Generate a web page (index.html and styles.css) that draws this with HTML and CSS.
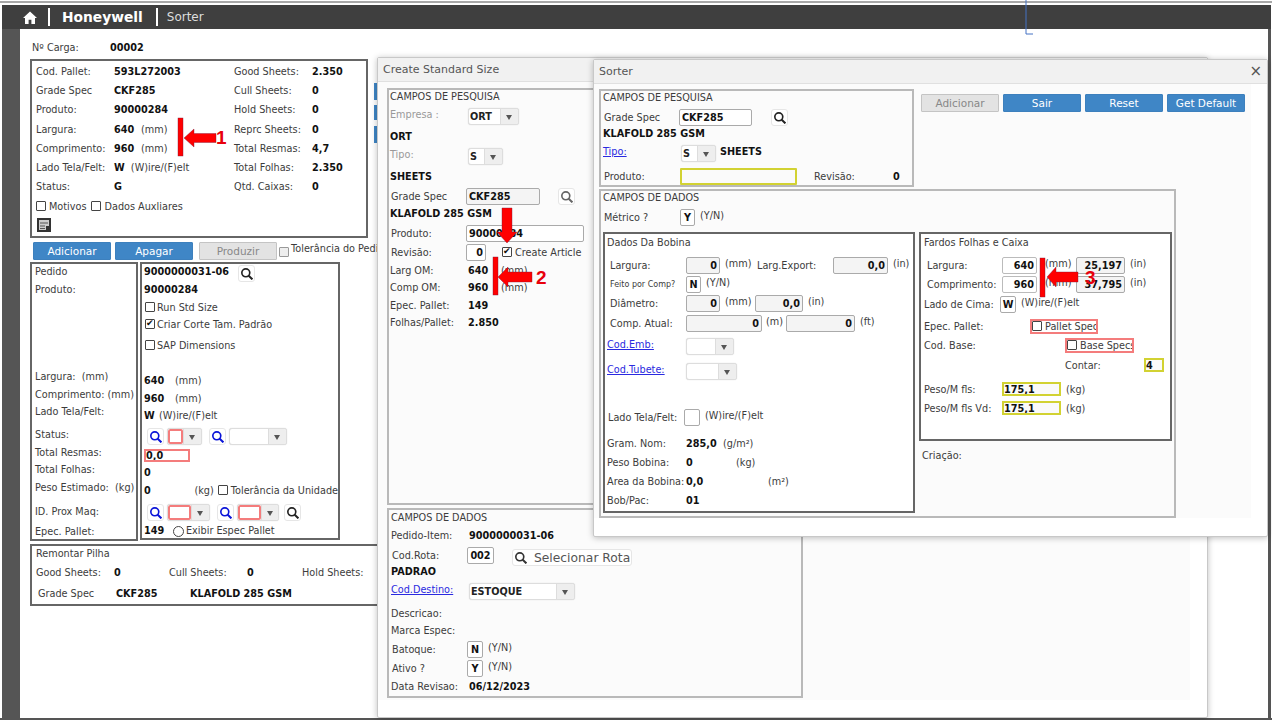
FILE: index.html
```html
<!DOCTYPE html>
<html lang="pt">
<head>
  <meta charset="UTF-8" />
  <title>Sorter</title>
  <link rel="stylesheet" href="styles.css">
</head>
<body>
  <svg class="defs" width="0" height="0">
    <symbol id="lupa" viewBox="1 1 14.500 14.500"><circle cx="6.800" cy="6.800" r="4.800" fill="none" stroke="currentColor" stroke-width="2"/><path d="M10.300 10.300 14.800 14.800" stroke="currentColor" stroke-width="2.400" fill="none"/></symbol>
  </svg>

  <div class="frame">
    <header class="topbar">
      <svg class="home" viewBox="0 0 14 13"><path d="M7 .5 0 7h2v6h3.600V8.800h2.800V13H12V7h2z" fill="#fff"/></svg>
      <span class="tsep"></span>
      <span class="brand">Honeywell</span>
      <span class="tsep tsep2"></span>
      <span class="appname">Sorter</span>
    </header>

    <div class="shell">
      <div class="rail"></div>
      <main class="main">
        <div class="row"><span class="lab carga">Nº Carga:</span><b>00002</b></div>

        <section class="box box-pallet">
          <div class="pallet-grid">
            <span>Cod. Pallet:</span><b>593L272003</b><span>Good Sheets:</span><b>2.350</b>
            <span>Grade Spec</span><b>CKF285</b><span>Cull Sheets:</span><b>0</b>
            <span>Produto:</span><b>90000284</b><span>Hold Sheets:</span><b>0</b>
            <span>Largura:</span><span><b class="v24">640</b> (mm)</span><span>Reprc Sheets:</span><b>0</b>
            <span>Comprimento:</span><span><b class="v24">960</b> (mm)</span><span>Total Resmas:</span><b>4,7</b>
            <span>Lado Tela/Felt:</span><span><b>W</b>&nbsp; (W)ire/(F)elt</span><span>Total Folhas:</span><b>2.350</b>
            <span>Status:</span><b>G</b><span>Qtd. Caixas:</span><b>0</b>
          </div>
          <div class="row checks"><input type="checkbox" class="cb"><span>Motivos</span><input type="checkbox" class="cb ml5"><span>Dados Auxliares</span></div>
          <svg class="calc" viewBox="0 0 14 14"><rect width="14" height="14" fill="#333"/><rect x="2" y="2" width="10" height="10" fill="#ccc"/><path d="M3 5h8M3 8h5M3 10.500h5" stroke="#555"/><rect x="9" y="8" width="3" height="4" fill="#333"/></svg>
        </section>

        <div class="btnrow">
          <button class="btn">Adicionar</button>
          <button class="btn">Apagar</button>
          <button class="btn off ml2">Produzir</button>
          <input type="checkbox" class="cb dim"><span class="tol">Tolerância do Pedido</span>
        </div>

        <div class="lower">
          <section class="box box-ped-l">
            <div class="row">Pedido</div>
            <div class="row g4">Produto:</div>
            <div class="row g73">Largura: &nbsp;(mm)</div>
            <div class="row g4">Comprimento: (mm)</div>
            <div class="row g3">Lado Tela/Felt:</div>
            <div class="row g9">Status:</div>
            <div class="row g4">Total Resmas:</div>
            <div class="row g3">Total Folhas:</div>
            <div class="row g4">Peso Estimado: &nbsp;(kg)</div>
            <div class="row g10">ID. Prox Maq:</div>
            <div class="row g6">Epec. Pallet:</div>
          </section>
          <section class="box box-ped-r">
            <div class="row"><b>9000000031-06</b><a class="sb ml9 low"><svg><use href="#lupa"/></svg></a></div>
            <div class="row g4"><b>90000284</b></div>
            <div class="row g4"><input type="checkbox" class="cb ml1"><span class="ml2">Run Std Size</span></div>
            <div class="row g3"><input type="checkbox" class="cb ml1" checked><span class="ml2">Criar Corte Tam. Padrão</span></div>
            <div class="row g7"><input type="checkbox" class="cb ml1"><span class="ml2">SAP Dimensions</span></div>
            <div class="row g21"><b class="v31">640</b><span>(mm)</span></div>
            <div class="row g4"><b class="v31">960</b><span>(mm)</span></div>
            <div class="row g3"><b class="v15">W</b><span>(W)ire/(F)elt</span></div>
            <div class="row g7 ml3">
              <a class="sb blue"><svg><use href="#lupa"/></svg></a>
              <div class="sel w35 ml3"><i class="sel-val redv w15"></i><i class="sel-arr"></i></div>
              <a class="sb blue ml7"><svg><use href="#lupa"/></svg></a>
              <div class="sel w58 ml3"><i class="sel-val"></i><i class="sel-arr"></i></div>
            </div>
            <div class="row g5"><input class="fld red w46 left" value="0,0" readonly></div>
            <div class="row g3"><b>0</b></div>
            <div class="row g4"><b class="v51">0</b><span>(kg)</span><input type="checkbox" class="cb ml4"><span class="ml3">Tolerância da Unidade</span></div>
            <div class="row g8 ml3">
              <a class="sb blue"><svg><use href="#lupa"/></svg></a>
              <div class="sel w43 ml3"><i class="sel-val redv w23"></i><i class="sel-arr"></i></div>
              <a class="sb blue ml7"><svg><use href="#lupa"/></svg></a>
              <div class="sel w42 ml3"><i class="sel-val redv w23"></i><i class="sel-arr"></i></div>
              <a class="sb ml5"><svg><use href="#lupa"/></svg></a>
            </div>
            <div class="row g4"><b class="v29">149</b><input type="radio" class="rd"><span class="ml2">Exibir Espec Pallet</span></div>
          </section>
        </div>

        <section class="box box-pilha">
          <div class="row">Remontar Pilha</div>
          <div class="row g5"><span class="c78">Good Sheets:</span><b class="c55">0</b><span class="c78">Cull Sheets:</span><b class="c55">0</b><span>Hold Sheets:</span></div>
          <div class="row g7 ml2"><span class="c78">Grade Spec</span><b class="c74">CKF285</b><b>KLAFOLD 285 GSM</b></div>
        </section>
      </main>
    </div>
  </div>

  <!-- pedacos de botoes atras da janela -->
  <div class="behind b1"></div>
  <div class="behind b2"></div>
  <div class="behind b3"></div>

  <!-- janela de tras -->
  <section class="win win-create">
    <div class="win-head">Create Standard Size</div>
    <div class="sheet">
      <div class="panel pn-create">
        <div class="row">CAMPOS DE PESQUISA</div>
        <div class="row g4"><span class="lab muted">Empresa :</span><div class="sel w51 low"><i class="sel-val">ORT</i><i class="sel-arr"></i></div></div>
        <div class="row g8"><b>ORT</b></div>
        <div class="row g4"><span class="lab muted">Tipo:</span><div class="sel w35 low"><i class="sel-val">S</i><i class="sel-arr"></i></div></div>
        <div class="row g8"><b>SHEETS</b></div>
        <div class="row g6"><span class="lab ind1">Grade Spec</span><input class="fld w74 left grey" value="CKF285" readonly><a class="sb ml18 gr"><svg><use href="#lupa"/></svg></a></div>
        <div class="row g3"><b>KLAFOLD 285 GSM</b></div>
        <div class="row g6"><span class="lab ind1">Produto:</span><input class="fld w118 left" value="90000284" readonly></div>
        <div class="row g5"><span class="lab ind1">Revisão:</span><input class="fld w20" value="0" readonly><input type="checkbox" class="cb ml16" checked><span class="ml3">Create Article</span></div>
        <div class="row g4"><span class="lab">Larg OM:</span><b class="v33">640</b><span>(mm)</span></div>
        <div class="row g3"><span class="lab">Comp OM:</span><b class="v33">960</b><span>(mm)</span></div>
        <div class="row g4"><span class="lab">Epec. Pallet:</span><b>149</b></div>
        <div class="row g3"><span class="lab">Folhas/Pallet:</span><b>2.850</b></div>
      </div>
      <div class="panel pn-rota">
        <div class="row">CAMPOS DE DADOS</div>
        <div class="row g4"><span class="lab">Pedido-Item:</span><b>9000000031-06</b></div>
        <div class="row g6"><span class="lab ind1">Cod.Rota:</span><input class="fld w27 rota" value="002" readonly><button class="rota-btn"><svg><use href="#lupa"/></svg>Selecionar Rota</button></div>
        <div class="row g2"><b>PADRAO</b></div>
        <div class="row g4"><a class="lab lnk">Cod.Destino:</a><div class="sel w106 low"><i class="sel-val">ESTOQUE</i><i class="sel-arr"></i></div></div>
        <div class="row g10">Descricao:</div>
        <div class="row g3">Marca Espec:</div>
        <div class="row g5"><span class="lab ind1">Batoque:</span><input class="fld w16 mid" value="N" readonly><span class="ml5 up">(Y/N)</span></div>
        <div class="row g5"><span class="lab ind1">Ativo ?</span><input class="fld w16 mid" value="Y" readonly><span class="ml5 up">(Y/N)</span></div>
        <div class="row g4"><span class="lab">Data Revisao:</span><b>06/12/2023</b></div>
      </div>
    </div>
  </section>

  <!-- janela da frente -->
  <section class="win win-sorter">
    <div class="win-head">Sorter<span class="close">×</span></div>
    <div class="sheet">
      <div class="sorter-top">
        <div class="panel pn-search">
          <div class="row">CAMPOS DE PESQUISA</div>
          <div class="row g6"><span class="lab ind1">Grade Spec</span><input class="fld w73 left" value="CKF285" readonly><a class="sb ml19"><svg><use href="#lupa"/></svg></a></div>
          <div class="row g2"><b>KLAFOLD 285 GSM</b></div>
          <div class="row g4"><a class="lab lnk">Tipo:</a><div class="sel w35 low ml2"><i class="sel-val">S</i><i class="sel-arr"></i></div><b class="ml4">SHEETS</b></div>
          <div class="row g11"><span class="lab ind1">Produto:</span><input class="fld yel w117 ml1" readonly><span class="rev">Revisão:</span><b>0</b></div>
        </div>
        <div class="btnrow sorter-btns">
          <button class="btn off">Adicionar</button>
          <button class="btn">Sair</button>
          <button class="btn">Reset</button>
          <button class="btn">Get Default</button>
        </div>
      </div>
      <div class="panel pn-dados">
        <div class="row">CAMPOS DE DADOS</div>
        <div class="row g6"><span class="lab ind1 metrico">Métrico ?</span><input class="fld w15 mid" value="Y" readonly><span class="ml5 up">(Y/N)</span></div>
        <div class="cols">
          <div class="box pn-bob">
            <div class="row">Dados Da Bobina</div>
            <div class="row g9"><span class="lab ind">Largura:</span><input class="fld w34 grey" value="0" readonly><span class="ml5 u32 up">(mm)</span><span class="lab2">Larg.Export:</span><input class="fld w55 grey" value="0,0" readonly><span class="ml5 up">(in)</span></div>
            <div class="row g5"><span class="lab ind tiny">Feito por Comp?</span><input class="fld w15 mid" value="N" readonly><span class="ml5 up">(Y/N)</span></div>
            <div class="row g5"><span class="lab ind">Diâmetro:</span><input class="fld w34 grey" value="0" readonly><span class="ml5 u30 up">(mm)</span><input class="fld w48 grey" value="0,0" readonly><span class="ml5 up">(in)</span></div>
            <div class="row g6"><span class="lab ind">Comp. Atual:</span><input class="fld w76 grey" value="0" readonly><span class="ml4 u20 up">(m)</span><input class="fld w69 grey" value="0" readonly><span class="ml5 up">(ft)</span></div>
            <div class="row g7"><a class="lab lnk">Cod.Emb:</a><div class="sel w48 low"><i class="sel-val"></i><i class="sel-arr"></i></div></div>
            <div class="row g11"><a class="lab lnk">Cod.Tubete:</a><div class="sel w51 low"><i class="sel-val"></i><i class="sel-arr"></i></div></div>
            <div class="row g34"><span class="lab lado">Lado Tela/Felt:</span><input class="fld w16" readonly><span class="ml5 up">(W)ire/(F)elt</span></div>
            <div class="row g12"><span class="lab">Gram. Nom:</span><b class="v37">285,0</b><span>(g/m²)</span></div>
            <div class="row g5"><span class="lab">Peso Bobina:</span><b class="v50">0</b><span>(kg)</span></div>
            <div class="row g5"><span class="lab">Area da Bobina:</span><b class="v82">0,0</b><span>(m²)</span></div>
            <div class="row g5"><span class="lab">Bob/Pac:</span><b>01</b></div>
          </div>
          <div class="far-col">
            <div class="box pn-far">
              <div class="row">Fardos Folhas e Caixa</div>
              <div class="row g9"><span class="lab ind">Largura:</span><input class="fld w35 strong" value="640" readonly><span class="ml8 u31 up">(mm)</span><input class="fld w49 grey" value="25,197" readonly><span class="ml5 up">(in)</span></div>
              <div class="row g5"><span class="lab ind">Comprimento:</span><input class="fld w35 strong" value="960" readonly><span class="ml8 u31 up">(mm)</span><input class="fld w49 grey" value="37,795" readonly><span class="ml5 up">(in)</span></div>
              <div class="row g6"><span class="lab l76">Lado de Cima:</span><input class="fld w16 mid" value="W" readonly><span class="ml5 up">(W)ire/(F)elt</span></div>
              <div class="row g8"><span class="lab l106">Epec. Pallet:</span><span class="flag w68"><input type="checkbox" class="cb"><span class="ml3">Pallet Spec</span></span></div>
              <div class="row g5"><span class="lab l141">Cod. Base:</span><span class="flag w69"><input type="checkbox" class="cb"><span class="ml3">Base Specs</span></span></div>
              <div class="row g6"><span class="lab l141"></span><span class="l80">Contar:</span><input class="fld yel w20 left" value="4" readonly></div>
              <div class="row g10"><span class="lab">Peso/M fls:</span><input class="fld yel w59 left" value="175,1" readonly><span class="ml5">(kg)</span></div>
              <div class="row g5"><span class="lab">Peso/M fls Vd:</span><input class="fld yel w59 left" value="175,1" readonly><span class="ml5">(kg)</span></div>
            </div>
            <div class="row criacao">Criação:</div>
          </div>
        </div>
      </div>
    </div>
  </section>

  <!-- setas de anotacao por cima da tela -->
  <svg class="notes" viewBox="0 0 1272 720">
    <path d="M1026 34V0M1026 34h7" stroke="#4472c4" stroke-width="1" fill="none"/>
    <g fill="#f00" stroke="#7a1a3a" stroke-width=".4">
      <rect x="178" y="118" width="5" height="38"/>
      <path d="M184 138 194 129v4.500h22v9h-22V147z"/>
      <rect x="493" y="257" width="5" height="38"/>
      <path d="M498 277 508 267v5h24v10h-24v5z"/>
      <path d="M502 208h10v24h5l-10 11-10-11h5z"/>
      <rect x="1040" y="258" width="5" height="39"/>
      <path d="M1047 277 1056 267v5h22v10h-22v5z"/>
    </g>
    <g class="note-num">
      <text x="216" y="144">1</text>
      <text x="536" y="284">2</text>
      <text x="1085" y="284">3</text>
    </g>
  </svg>
</body>
</html>
```

FILE: styles.css
```css
* {
  box-sizing: border-box;
}
body {
  margin: 0;
  width: 1272px;
  height: 720px;
  overflow: hidden;
  position: relative;
  background: #fff;
  font-family: "DejaVu Sans", sans-serif;
  font-size: 9.7px;
  color: #3c3c3c;
}
b {
  color: #111;
  font-weight: bold;
}
i {
  font-style: normal;
}
input {
  margin: 0;
}
.defs {
  position: absolute;
}

/* moldura */
.frame {
  height: 719px;
  margin-top: 1px;
  padding: 2px 1px 0 2px;
  border-top: 2px solid #a8a8a8;
  border-bottom: 2px solid #555;
  display: flex;
  flex-direction: column;
}
.topbar {
  height: 24px;
  flex: none;
  background: #3f3f3f;
  display: flex;
  align-items: center;
  color: #fff;
}
.home {
  width: 14px;
  height: 13px;
  margin-left: 21px;
}
.tsep {
  width: 2px;
  height: 18px;
  margin-left: 11px;
  background: #fff;
}
.tsep2 {
  margin-left: 13px;
}
.brand {
  margin-left: 12px;
  font-size: 13.8px;
  font-weight: bold;
}
.appname {
  margin-left: 9px;
  font-size: 12px;
  color: #ddd;
}
.shell {
  flex: 1;
  display: flex;
  border-right: 3px solid #555;
}
.rail {
  width: 18px;
  background: #555;
}
.main {
  flex: 1;
  padding: 11px 0 0 10px;
}

/* linhas de formulario */
.row {
  display: flex;
  align-items: center;
  height: 14px;
  white-space: nowrap;
}
.g2 { margin-top: 2px; }
.g3 { margin-top: 3px; }
.g4 { margin-top: 4px; }
.g5 { margin-top: 5px; }
.g6 { margin-top: 6px; }
.g7 { margin-top: 7px; }
.g8 { margin-top: 8px; }
.g9 { margin-top: 9px; }
.g10 { margin-top: 10px; }
.g11 { margin-top: 11px; }
.g12 { margin-top: 12px; }
.g21 { margin-top: 21px; }
.g34 { margin-top: 34px; }
.g73 { margin-top: 73px; }
.ml1 { margin-left: 1px; }
.ml2 { margin-left: 2px; }
.ml3 { margin-left: 3px; }
.ml4 { margin-left: 4px; }
.ml5 { margin-left: 5px; }
.ml7 { margin-left: 7px; }
.ml8 { margin-left: 8px; }
.ml9 { margin-left: 9px; }
.ml16 { margin-left: 16px; }
.ml18 { margin-left: 18px; }
.ml19 { margin-left: 19px; }
.low { margin-top: 5px; }
.up { margin-top: -3px; }
.lab {
  flex: none;
  width: 78px;
}
.lab.ind1 {
  padding-left: 1px;
}
.muted {
  color: #999;
}
.lnk {
  color: #2a2ae0;
  text-decoration: underline;
}
.tiny {
  font-size: 8px;
}
.carga {
  margin-left: 2px;
}

/* caixas */
.box {
  border: 2px solid #666;
  background: #fff;
}
.box-pallet {
  width: 338px;
  height: 179px;
  margin-top: 5px;
  padding: 1px 0 0 4px;
}
.pallet-grid {
  display: grid;
  grid-template-columns: 78px 120px 78px auto;
  grid-auto-rows: 19.2px;
  align-items: center;
  white-space: nowrap;
}
.v24 {
  display: inline-block;
  width: 24px;
}
.checks {
  margin-top: 3px;
}
.checks span {
  margin-left: 3px;
}
.calc {
  display: block;
  width: 14px;
  height: 14px;
  margin: 5px 0 0 1px;
}
.btnrow {
  display: flex;
  height: 18px;
  margin-top: 4px;
  margin-left: 3px;
  gap: 4px;
  white-space: nowrap;
}
.btn {
  width: 78px;
  height: 18px;
  padding: 0;
  border: 1px solid #3d80bd;
  border-radius: 1px;
  background: #3f86c6;
  color: #fff;
  font: 10.5px "DejaVu Sans", sans-serif;
}
.btn.off {
  background: #e3e3e3;
  border-color: #c4c4c4;
  color: #888;
}
.tol {
  margin: 1px 0 0 -2px;
}
.lower {
  display: flex;
  gap: 2px;
  margin-top: 2px;
}
.box-ped-l {
  width: 108px;
  height: 279px;
  padding-left: 3px;
  white-space: nowrap;
}
.box-ped-r {
  width: 200px;
  height: 278px;
  padding-left: 2px;
}
.v15 { width: 15px; }
.v29 { width: 29px; }
.v31 { width: 31px; }
.v33 { width: 33px; }
.v37 { width: 37px; }
.v50 { width: 50px; }
.v51 { width: 51px; }
.v82 { width: 82px; }
.box-pilha {
  width: 400px;
  height: 62px;
  margin-top: 3px;
  padding: 0 0 0 4px;
}
.c78 { width: 78px; }
.c55 { width: 55px; }
.c74 { width: 74px; }

/* campos */
.fld {
  flex: none;
  height: 17px;
  padding: 0 2px;
  border: 1.5px solid #aaa;
  border-radius: 2px;
  background: #fff;
  color: #111;
  font: bold 9.7px "DejaVu Sans", sans-serif;
  text-align: right;
  outline: none;
}
.fld.left { text-align: left; }
.fld.mid { text-align: center; padding: 0; }
.fld.grey { background: #f4f4f4; }
.fld.strong { border-color: #bbb; }
.fld.rota { text-align: center; padding: 0; }
.fld.red {
  height: 13px;
  padding: 0;
  border: 2px solid #f47c7c;
  border-radius: 0;
}
.fld.yel {
  height: 14px;
  padding: 0;
  border: 2px solid #d2d232;
  border-radius: 0;
  background: #fafafa;
}
.pn-search .fld.yel {
  height: 17px;
  border-radius: 1px;
}
.w15 { width: 15px; }
.w16 { width: 16px; }
.w20 { width: 20px; }
.w23 { width: 23px; }
.w27 { width: 27px; }
.w34 { width: 34px; }
.w35 { width: 35px; }
.w42 { width: 42px; }
.w43 { width: 43px; }
.w46 { width: 46px; }
.w48 { width: 48px; }
.w49 { width: 49px; }
.w51 { width: 51px; }
.w55 { width: 55px; }
.w58 { width: 58px; }
.w59 { width: 59px; }
.w68 { width: 68px; }
.w69 { width: 69px; }
.w73 { width: 73px; }
.w74 { width: 74px; }
.w76 { width: 76px; }
.w106 { width: 106px; }
.w117 { width: 117px; }
.w118 { width: 118px; }

.cb {
  appearance: none;
  flex: none;
  width: 10px;
  height: 10px;
  border: 1px solid #444;
  border-radius: 1px;
  background: #fff;
  position: relative;
}
.cb:checked::after {
  content: "✔";
  position: absolute;
  left: 0;
  top: -2px;
  font-size: 9px;
  line-height: 11px;
  color: #111;
}
.cb.dim {
  background: #eee;
  border-color: #999;
  margin: 5px 0 0 -2px;
}
.rd {
  appearance: none;
  flex: none;
  width: 11px;
  height: 11px;
  margin-top: 2px;
  border: 1px solid #444;
  border-radius: 50%;
  background: #fff;
}
.sel {
  flex: none;
  display: flex;
  height: 17px;
  border: 1px solid #ddd;
  border-radius: 3px;
  background: #fff;
  box-shadow: 0 0 1px #ccc;
  overflow: hidden;
}
.sel-val {
  flex: 1;
  padding-left: 1px;
  line-height: 15px;
  font-weight: bold;
  color: #222;
}
.sel-val.w15 { flex: none; width: 15px; }
.sel-val.w23 { flex: none; width: 23px; }
.sel-val.redv {
  border: 2px solid #f47c7c;
  border-radius: 2px;
}
.sel-arr {
  flex: none;
  width: 18px;
  margin-left: auto;
  background: #eee;
  border-left: 1px solid #ddd;
  position: relative;
}
.sel-arr::after {
  content: "";
  position: absolute;
  left: 5px;
  top: 6px;
  border: 3.5px solid transparent;
  border-top: 5px solid #555;
}
.sb {
  flex: none;
  width: 17px;
  height: 17px;
  padding: 2px;
  border: 1px solid #e6e6e6;
  border-radius: 3px;
  background: #fff;
  color: #222;
  display: block;
}
.sb svg {
  display: block;
  width: 12px;
  height: 12px;
}
.sb.blue { color: #0a14d8; }
.sb.gr { color: #666; }

/* janelas */
.win {
  position: absolute;
  border: 1px solid #c8c8c8;
  background: #fff;
  box-shadow: 0 1px 6px rgba(0, 0, 0, 0.25);
  border-radius: 2px;
}
.win-head {
  height: 24px;
  padding-left: 5px;
  background: #f1f1f1;
  border-bottom: 1px solid #e0e0e0;
  font-size: 11px;
  line-height: 23px;
  color: #555;
  position: relative;
}
.close {
  position: absolute;
  right: 5px;
  top: 0;
  font-size: 15px;
  color: #555;
}
.sheet {
  background: #fbfbfb;
}
.panel {
  border: 2px solid #b9b9b9;
}
.panel > .row:first-child {
  margin-top: -1px;
}
.behind {
  position: absolute;
  left: 374px;
  width: 3px;
  background: #3f86c6;
}
.b1 { top: 83px; height: 17px; }
.b2 { top: 105px; height: 15px; }
.b3 { top: 126px; height: 17px; }

.win-create {
  left: 377px;
  top: 57px;
  width: 831px;
  height: 661px;
}
.win-create .sheet {
  width: 812px;
  height: 618px;
  padding: 6px 0 0 9px;
}
.pn-create {
  width: 416px;
  height: 417px;
  padding-left: 1px;
}
.pn-create .fld,
.pn-rota .fld {
  margin-left: -2px;
}
.pn-rota {
  width: 416px;
  height: 190px;
  margin-top: 3px;
  padding: 1px 0 0 2px;
}
.rota-btn {
  display: flex;
  align-items: center;
  gap: 7px;
  width: 120px;
  height: 17px;
  margin: 5px 0 0 18px;
  padding: 0 0 0 2px;
  border: 1px solid #e6e6e6;
  border-radius: 3px;
  background: #fff;
  color: #555;
  font: 12.3px "DejaVu Sans", sans-serif;
  white-space: nowrap;
}
.rota-btn svg {
  flex: none;
  width: 12px;
  height: 12px;
  color: #333;
}

.win-sorter {
  left: 593px;
  top: 59px;
  width: 675px;
  height: 478px;
}
.win-sorter .sheet {
  width: 657px;
  height: 434px;
  padding: 5px 0 0 5px;
}
.sorter-top {
  display: flex;
}
.pn-search {
  width: 315px;
  height: 98px;
  padding-left: 2px;
}
.pn-search .lab {
  width: 76px;
}
.sorter-btns {
  margin: 5px 0 0 7px;
}
.rev {
  margin-left: 17px;
  width: 79px;
}
.pn-dados {
  width: 577px;
  height: 329px;
  margin-top: 2px;
  padding-left: 2px;
}
.lab.metrico {
  width: 77px;
}
.cols {
  display: flex;
  gap: 4px;
  margin-top: 8px;
}
.pn-bob {
  width: 312px;
  height: 281px;
  padding: 1px 0 0 2px;
}
.pn-bob .lab {
  width: 79px;
}
.pn-bob .lab.lado {
  width: 77px;
  padding-left: 1px;
}
.lab.ind {
  padding-left: 3px;
}
.lab2 {
  width: 76px;
}
.u20 { width: 20px; }
.u30 { width: 30px; }
.u31 { width: 31px; }
.u32 { width: 27px; margin-right: 5px; }
.far-col {
  width: 253px;
}
.pn-far {
  height: 209px;
  padding: 1px 0 0 3px;
}
.l76 { width: 76px; }
.l80 { width: 79px; }
.l106 { width: 106px; }
.l141 { width: 141px; }
.flag {
  display: flex;
  align-items: center;
  height: 15px;
  border: 2px solid #f47c7c;
  overflow: hidden;
}
.criacao {
  margin: 7px 0 0 3px;
}

/* anotacoes */
.notes {
  position: absolute;
  left: 0;
  top: 0;
  width: 1272px;
  height: 720px;
  pointer-events: none;
}
.note-num {
  font-family: "Liberation Sans", sans-serif;
  font-size: 19px;
  font-weight: bold;
  fill: #e8000c;
}
```
